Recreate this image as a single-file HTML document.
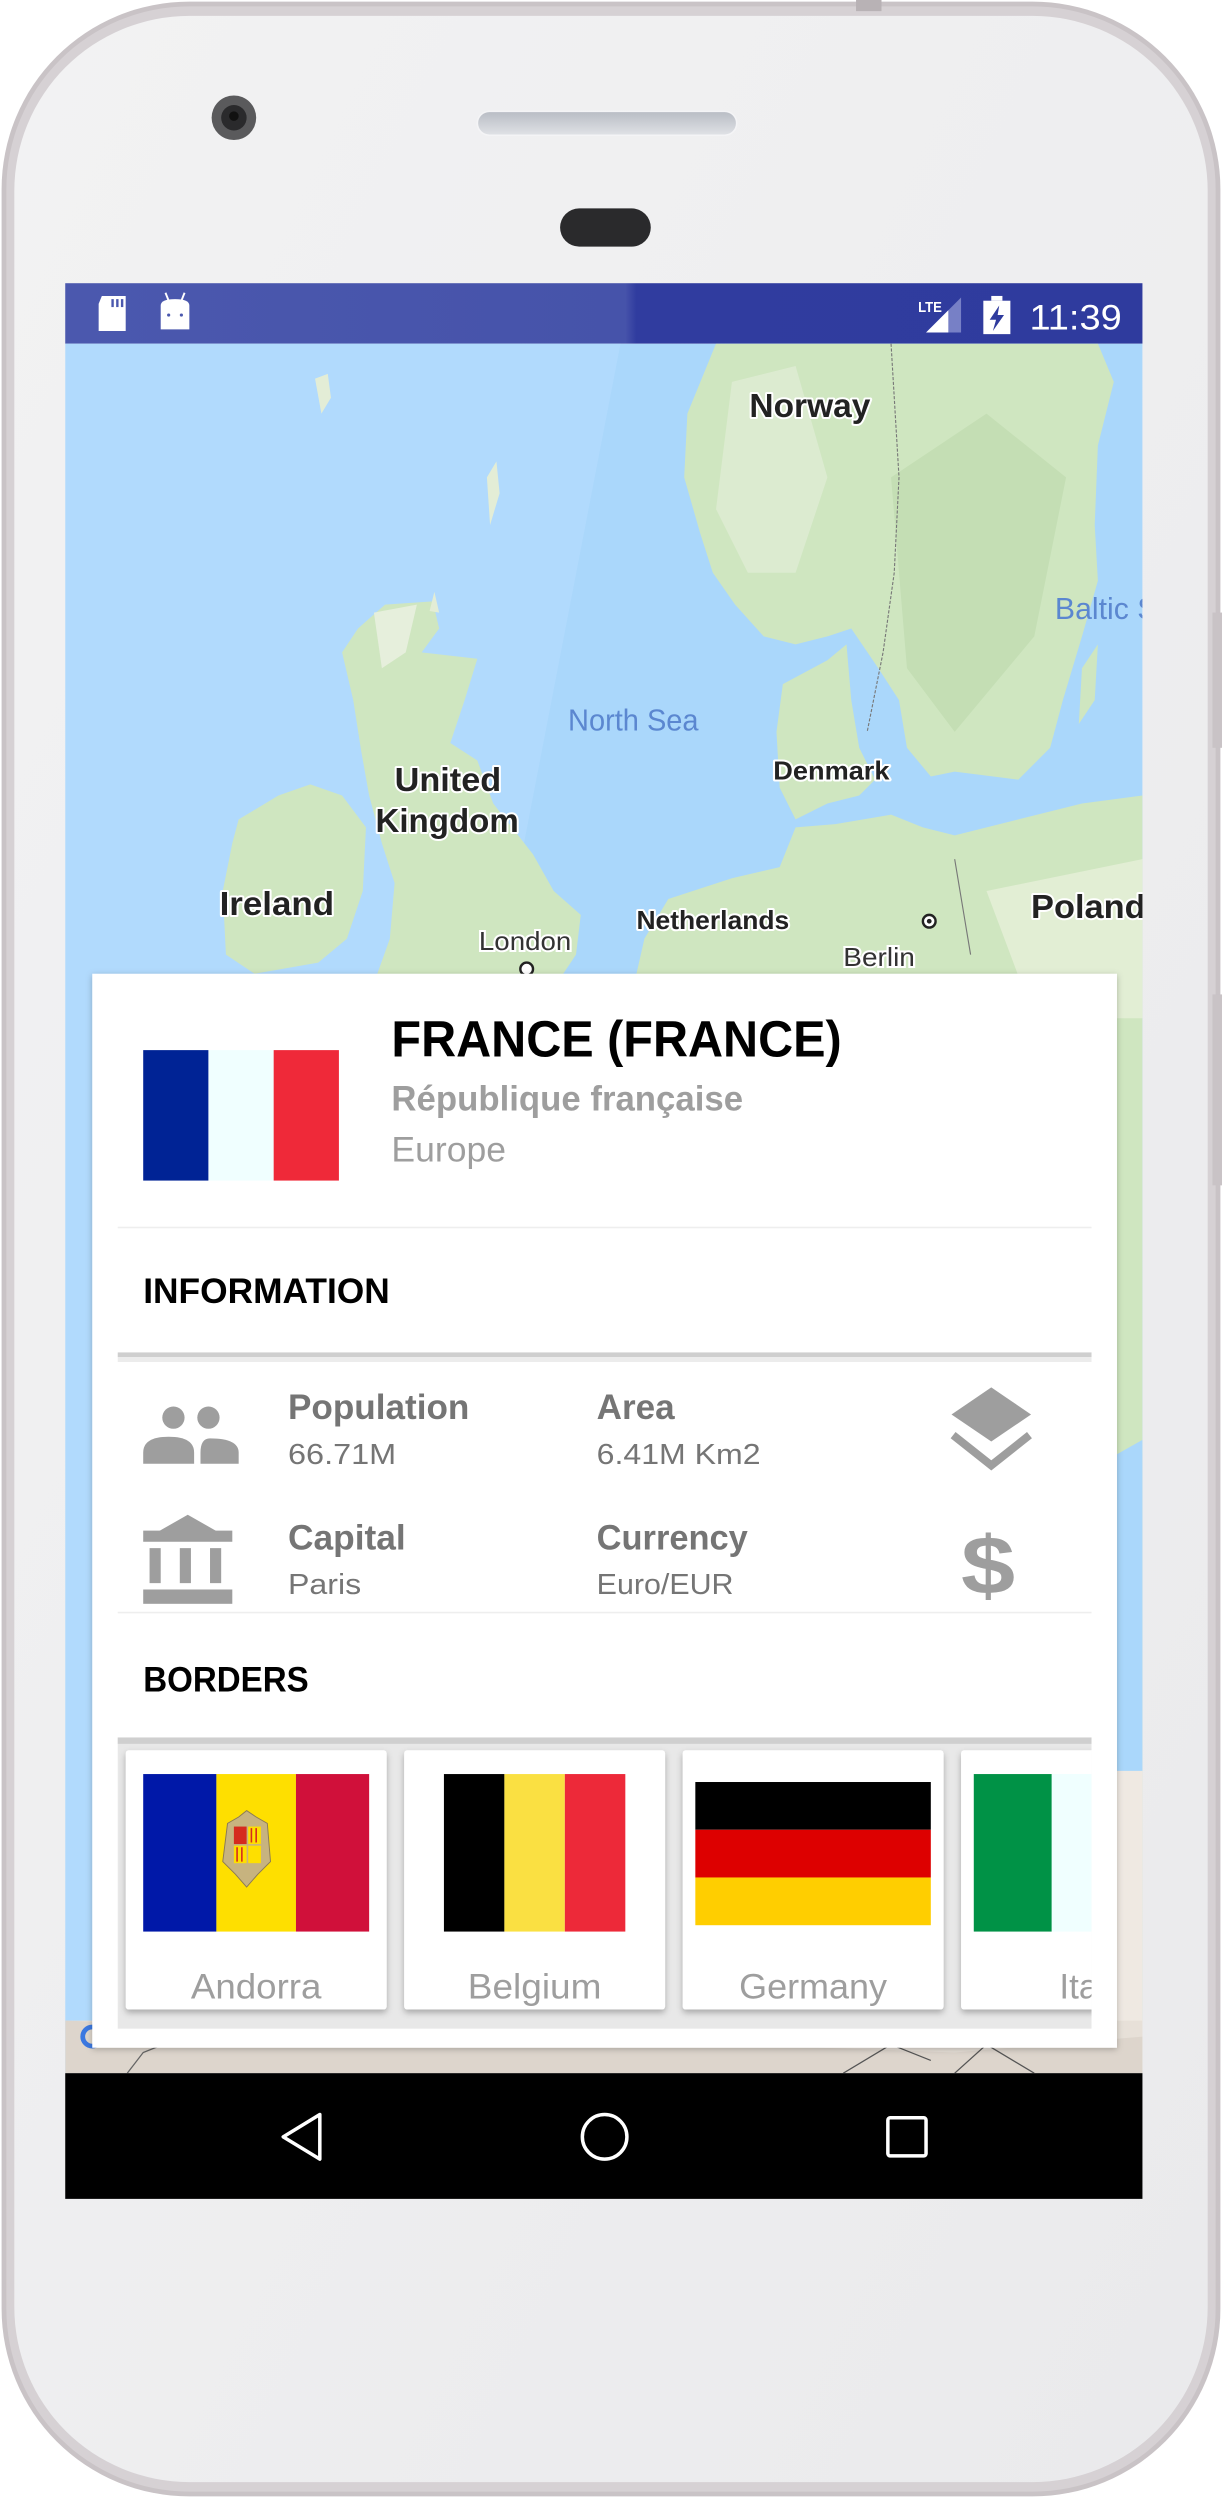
<!DOCTYPE html>
<html><head><meta charset="utf-8"><style>
html,body{margin:0;padding:0;background:#fff;}
svg{display:block;}
text{font-family:"Liberation Sans",sans-serif;}
</style></head><body>
<svg width="1222" height="2498" viewBox="0 0 768 1570" preserveAspectRatio="none" xmlns="http://www.w3.org/2000/svg">
<defs>
<linearGradient id="body" x1="0" y1="0" x2="1" y2="1">
<stop offset="0" stop-color="#f2f2f3"/><stop offset="1" stop-color="#eaeaec"/></linearGradient>
<linearGradient id="sb" x1="0" y1="0" x2="1" y2="0">
<stop offset="0" stop-color="#4b58ae"/><stop offset="0.52" stop-color="#4653aa"/><stop offset="0.53" stop-color="#303c9f"/><stop offset="1" stop-color="#2f3b9e"/></linearGradient>
<linearGradient id="spk" x1="0" y1="0" x2="0" y2="1">
<stop offset="0" stop-color="#b8bcc4"/><stop offset="1" stop-color="#e0e2e6"/></linearGradient>
<filter id="sh" x="-5%" y="-5%" width="110%" height="110%"><feDropShadow dx="0" dy="1" stdDeviation="2" flood-opacity="0.25"/></filter>
<filter id="sh2" x="-10%" y="-10%" width="120%" height="120%"><feDropShadow dx="0" dy="2" stdDeviation="2" flood-opacity="0.28"/></filter>
<clipPath id="mapc"><rect x="41" y="216" width="677" height="1087"/></clipPath>
<clipPath id="brd"><rect x="74" y="1095" width="612" height="180"/></clipPath>
</defs>

<rect x="1" y="1" width="766" height="1568" rx="118" fill="#c9c3c6"/>
<rect x="4" y="4" width="760" height="1562" rx="115" fill="#d6d1d4"/>
<rect x="9" y="10" width="750" height="1550" rx="110" fill="url(#body)"/>
<rect x="538" y="0" width="16" height="7" fill="#b8b2b5"/>
<rect x="762" y="385" width="6" height="85" fill="#c9c3c6"/>
<rect x="762" y="625" width="6" height="120" fill="#c9c3c6"/>

<ellipse cx="147" cy="74" rx="14" ry="14" fill="#5a5a5c"/>
<circle cx="147" cy="74" r="8" fill="#2a2a2c"/>
<circle cx="147" cy="73" r="3" fill="#111"/>
<rect x="300" y="70" width="163" height="15" rx="7.5" fill="url(#spk)" stroke="#f4f4f6" stroke-width="1"/>
<rect x="352" y="131" width="57" height="24" rx="12" fill="#2a2a2c"/>

<rect x="41" y="178" width="677" height="38" fill="url(#sb)"/>
<path d="M64 186 H79 V208 H62 V191 Z" fill="#fff"/>
<rect x="70" y="188" width="1.5" height="5" fill="#4b58ae"/><rect x="73" y="188" width="1.5" height="5" fill="#4b58ae"/><rect x="76" y="188" width="1.5" height="5" fill="#4b58ae"/>
<path d="M101 207 V192 Q101 188 110 188 Q119 188 119 192 V207 Z" fill="#fff"/>
<line x1="104" y1="184" x2="106" y2="189" stroke="#fff" stroke-width="1.2"/><line x1="116" y1="184" x2="114" y2="189" stroke="#fff" stroke-width="1.2"/>
<circle cx="106" cy="198" r="1" fill="#4b58ae"/><circle cx="114" cy="198" r="1" fill="#4b58ae"/>
<text x="577" y="196" font-size="9" font-weight="bold" fill="#fff" textLength="15" lengthAdjust="spacingAndGlyphs">LTE</text>
<path d="M582 209 L604 209 L604 187 Z" fill="#7780c6"/>
<path d="M582 209 L596 209 L596 195 Z" fill="#fff"/>
<rect x="618" y="189" width="17" height="21" fill="#fff"/><rect x="623" y="186" width="7" height="3" fill="#fff"/>
<path d="M628 192 L622 201 L626 201 L624 208 L631 198 L627 198 Z" fill="#2f3b9e"/>
<text x="647" y="207" font-size="22" fill="#fff" textLength="58" lengthAdjust="spacingAndGlyphs">11:39</text>

<g clip-path="url(#mapc)">
<rect x="41" y="216" width="677" height="1087" fill="#aad7fb"/>
<path d="M41 216 L390 216 L180 1303 L41 1303 Z" fill="#b3dcfd" opacity="0.7"/>
<path d="M450 216 L690 216 L700 240 L690 280 L688 330 L690 365 L680 400 L668 440 L660 470 L640 490 L600 485 L585 488 L570 470 L565 440 L552 420 L535 395 L520 400 L500 405 L480 400 L462 380 L448 360 L440 335 L430 300 L432 260 Z" fill="#cfe6c0"/>
<path d="M460 240 L500 230 L520 300 L500 360 L470 360 L450 320 Z" fill="#dcebd0"/>
<path d="M560 300 L620 260 L670 300 L650 400 L600 460 L570 420 Z" fill="#c4deb4"/>
<path d="M680 420 L690 405 L688 440 L678 455 Z" fill="#cfe6c0"/>
<path d="M492 430 L520 415 L532 405 L535 440 L540 470 L550 490 L540 500 L520 505 L500 515 L490 495 L488 460 Z" fill="#cfe6c0"/>
<path d="M400 612 L405 590 L420 565 L460 552 L490 545 L500 520 L525 518 L560 512 L580 520 L600 525 L640 515 L680 505 L718 500 L718 1303 L400 1303 Z" fill="#cfe6c0"/>
<path d="M620 560 L718 540 L718 640 L650 640 Z" fill="#e2eed4"/>
<path d="M702 914 L718 905 L718 1113 L702 1125 Z" fill="#aad7fb"/>
<rect x="702" y="1113" width="16" height="190" fill="#efe9e2"/>
<rect x="41" y="1270" width="677" height="33" fill="#e7e0d8"/>
<path d="M41 1270 L41 1303 L718 1303 L718 1280 L600 1290 Z" fill="#ddd5cc"/>
<path d="M80 1303 L90 1290 L110 1282" stroke="#666" stroke-width="0.8" fill="none"/>
<path d="M530 1303 L560 1285 L585 1295 M600 1303 L620 1285 L650 1303" stroke="#555" stroke-width="0.8" fill="none"/>
<path d="M242 380 L272 378 L276 395 L265 410 L300 414 L292 440 L283 467 L300 478 L310 505 L335 537 L348 560 L365 575 L362 600 L350 618 L235 618 L245 590 L248 555 L240 530 L232 500 L227 472 L222 440 L215 410 L225 395 Z" fill="#cfe6c0"/>
<path d="M235 385 L262 380 L255 410 L240 420 Z" fill="#e6efdc"/>
<path d="M150 515 L175 500 L195 493 L215 500 L230 520 L228 560 L218 590 L200 605 L160 612 L142 600 L140 560 L146 530 Z" fill="#cfe6c0"/>
<path d="M198 238 L206 235 L208 250 L202 260 Z" fill="#e3edd6"/>
<path d="M306 300 L312 290 L314 310 L308 330 Z" fill="#e3edd6"/>
<path d="M270 384 L273 372 L276 385 Z" fill="#e3edd6"/>
<path d="M560 216 L565 300 L562 360 L555 410 L545 460" stroke="#777" stroke-width="0.7" fill="none" stroke-dasharray="2 1"/>
<path d="M600 540 L610 600" stroke="#777" stroke-width="0.7" fill="none"/>
<g font-weight="bold" fill="#222" stroke="#fff" stroke-width="2.5" paint-order="stroke" stroke-linejoin="round">
<text x="471" y="262" font-size="21" textLength="76" lengthAdjust="spacingAndGlyphs">Norway</text>
<text x="248" y="497" font-size="21" textLength="67" lengthAdjust="spacingAndGlyphs">United</text>
<text x="236" y="523" font-size="21" textLength="90" lengthAdjust="spacingAndGlyphs">Kingdom</text>
<text x="138" y="575" font-size="21" textLength="72" lengthAdjust="spacingAndGlyphs">Ireland</text>
<text x="486" y="490" font-size="16" textLength="73" lengthAdjust="spacingAndGlyphs">Denmark</text>
<text x="400" y="584" font-size="16" textLength="96" lengthAdjust="spacingAndGlyphs">Netherlands</text>
<text x="648" y="577" font-size="21" textLength="72" lengthAdjust="spacingAndGlyphs">Poland</text>
</g>
<g fill="#333" stroke="#fff" stroke-width="2.5" paint-order="stroke">
<text x="301" y="597" font-size="16" textLength="58" lengthAdjust="spacingAndGlyphs">London</text>
<text x="530" y="607" font-size="16" textLength="45" lengthAdjust="spacingAndGlyphs">Berlin</text>
</g>
<text x="357" y="459" font-size="19" fill="#5b87d0" textLength="82" lengthAdjust="spacingAndGlyphs">North Sea</text>
<text x="663" y="389" font-size="19" fill="#5b87d0">Baltic S</text>
<circle cx="584" cy="579" r="4" fill="#fff" stroke="#222" stroke-width="1.5"/><circle cx="584" cy="579" r="1.5" fill="#222"/>
<circle cx="331" cy="609" r="4" fill="#fff" stroke="#222" stroke-width="1.5"/>
<circle cx="58" cy="1280" r="6" fill="none" stroke="#3b78e0" stroke-width="3"/>
</g>

<rect x="41" y="1303" width="677" height="79" fill="#000"/>
<path d="M201 1329 L178 1343 L201 1357 Z" fill="none" stroke="#fff" stroke-width="2.2" stroke-linejoin="round"/>
<circle cx="380" cy="1343" r="14" fill="none" stroke="#fff" stroke-width="2.2"/>
<rect x="558" y="1331" width="24" height="24" rx="1.5" fill="none" stroke="#fff" stroke-width="2.2"/>

<rect x="58" y="612" width="644" height="675" fill="#fff" filter="url(#sh)"/>
<rect x="90" y="660" width="41" height="82" fill="#002395"/>
<rect x="131" y="660" width="41" height="82" fill="#f0ffff"/>
<rect x="172" y="660" width="41" height="82" fill="#ef2939"/>
<text x="246" y="664" font-size="32" font-weight="bold" fill="#000" textLength="283" lengthAdjust="spacingAndGlyphs">FRANCE (FRANCE)</text>
<text x="246" y="698" font-size="22" font-weight="bold" fill="#9e9e9e" textLength="221" lengthAdjust="spacingAndGlyphs">République française</text>
<text x="246" y="730" font-size="22" fill="#9e9e9e" textLength="72" lengthAdjust="spacingAndGlyphs">Europe</text>
<rect x="74" y="771" width="612" height="1" fill="#eeeeee"/>
<text x="90" y="819" font-size="22" font-weight="bold" fill="#000" textLength="155" lengthAdjust="spacingAndGlyphs">INFORMATION</text>
<rect x="74" y="850" width="612" height="3" fill="#cfcfcf"/>
<rect x="74" y="853" width="612" height="3" fill="#ececec"/>

<g fill="#9e9e9e">
<circle cx="109" cy="891" r="7"/><circle cx="131" cy="891" r="7"/>
<path d="M90 920 V913 Q90 903 106 903 Q122 903 122 913 V920 Z"/>
<path d="M126 920 V913 Q126 904 132 904 Q150 904 150 913 V920 Z"/>
<path d="M623 872 L648 889 L623 906 L598 889 Z"/>
<path d="M599 902 L623 921 L647 902" fill="none" stroke="#9e9e9e" stroke-width="5"/>
<path d="M118 952 L146 968 L90 968 Z"/><rect x="90" y="962" width="56" height="7"/>
<rect x="94" y="973" width="7" height="22"/><rect x="113" y="973" width="7" height="22"/><rect x="132" y="973" width="7" height="22"/>
<rect x="90" y="999" width="56" height="9"/>
<text x="604" y="1002" font-size="52" font-weight="bold" textLength="34" lengthAdjust="spacingAndGlyphs">$</text>
</g>
<g fill="#757575">
<text x="181" y="892" font-size="22" font-weight="bold" textLength="114" lengthAdjust="spacingAndGlyphs">Population</text>
<text x="181" y="920" font-size="18" textLength="68" lengthAdjust="spacingAndGlyphs">66.71M</text>
<text x="375" y="892" font-size="22" font-weight="bold" textLength="49" lengthAdjust="spacingAndGlyphs">Area</text>
<text x="375" y="920" font-size="18" textLength="103" lengthAdjust="spacingAndGlyphs">6.41M Km2</text>
<text x="181" y="974" font-size="22" font-weight="bold" textLength="74" lengthAdjust="spacingAndGlyphs">Capital</text>
<text x="181" y="1002" font-size="18" textLength="46" lengthAdjust="spacingAndGlyphs">Paris</text>
<text x="375" y="974" font-size="22" font-weight="bold" textLength="95" lengthAdjust="spacingAndGlyphs">Currency</text>
<text x="375" y="1002" font-size="18" textLength="86" lengthAdjust="spacingAndGlyphs">Euro/EUR</text>
</g>
<rect x="74" y="1013" width="612" height="1" fill="#eeeeee"/>
<text x="90" y="1063" font-size="22" font-weight="bold" fill="#000" textLength="104" lengthAdjust="spacingAndGlyphs">BORDERS</text>

<rect x="74" y="1092" width="612" height="183" fill="#e8e8e8"/>
<rect x="74" y="1092" width="612" height="4" fill="#cfcfcf"/>
<g clip-path="url(#brd)">
<rect x="79" y="1100" width="164" height="163" rx="2" fill="#fff" filter="url(#sh2)"/>
<rect x="254" y="1100" width="164" height="163" rx="2" fill="#fff" filter="url(#sh2)"/>
<rect x="429" y="1100" width="164" height="163" rx="2" fill="#fff" filter="url(#sh2)"/>
<rect x="604" y="1100" width="164" height="163" rx="2" fill="#fff" filter="url(#sh2)"/>
<rect x="90" y="1115" width="46" height="99" fill="#0018a8"/>
<rect x="136" y="1115" width="50" height="99" fill="#fedf00"/>
<rect x="186" y="1115" width="46" height="99" fill="#d0103a"/>
<path d="M143 1146 L150 1142 L155 1138 L161 1142 L168 1146 L170 1170 L162 1178 L155 1186 L148 1178 L140 1170 Z" fill="#c7b37f" stroke="#8a7a55" stroke-width="0.6"/>
<rect x="147" y="1148" width="8" height="11" fill="#d52b1e"/><rect x="156" y="1148" width="8" height="11" fill="#fedf00"/>
<rect x="147" y="1160" width="8" height="11" fill="#fedf00"/><rect x="156" y="1160" width="8" height="11" fill="#fedf00"/>
<path d="M158 1149 V1158 M161 1149 V1158 M149 1161 V1170 M152 1161 V1170" stroke="#d52b1e" stroke-width="1"/>
<rect x="279" y="1115" width="38" height="99" fill="#000"/>
<rect x="317" y="1115" width="38" height="99" fill="#fae042"/>
<rect x="355" y="1115" width="38" height="99" fill="#ed2939"/>
<rect x="437" y="1120" width="148" height="30" fill="#000"/>
<rect x="437" y="1150" width="148" height="30" fill="#dd0000"/>
<rect x="437" y="1180" width="148" height="30" fill="#ffce00"/>
<rect x="612" y="1115" width="49" height="99" fill="#009246"/>
<rect x="661" y="1115" width="49" height="99" fill="#f0ffff"/>
<g font-size="22" fill="#9e9e9e" text-anchor="middle">
<text x="161" y="1256" textLength="82" lengthAdjust="spacingAndGlyphs">Andorra</text>
<text x="336" y="1256" textLength="84" lengthAdjust="spacingAndGlyphs">Belgium</text>
<text x="511" y="1256" textLength="93" lengthAdjust="spacingAndGlyphs">Germany</text>
<text x="686" y="1256">Italy</text>
</g>
</g>
</svg>
</body></html>
